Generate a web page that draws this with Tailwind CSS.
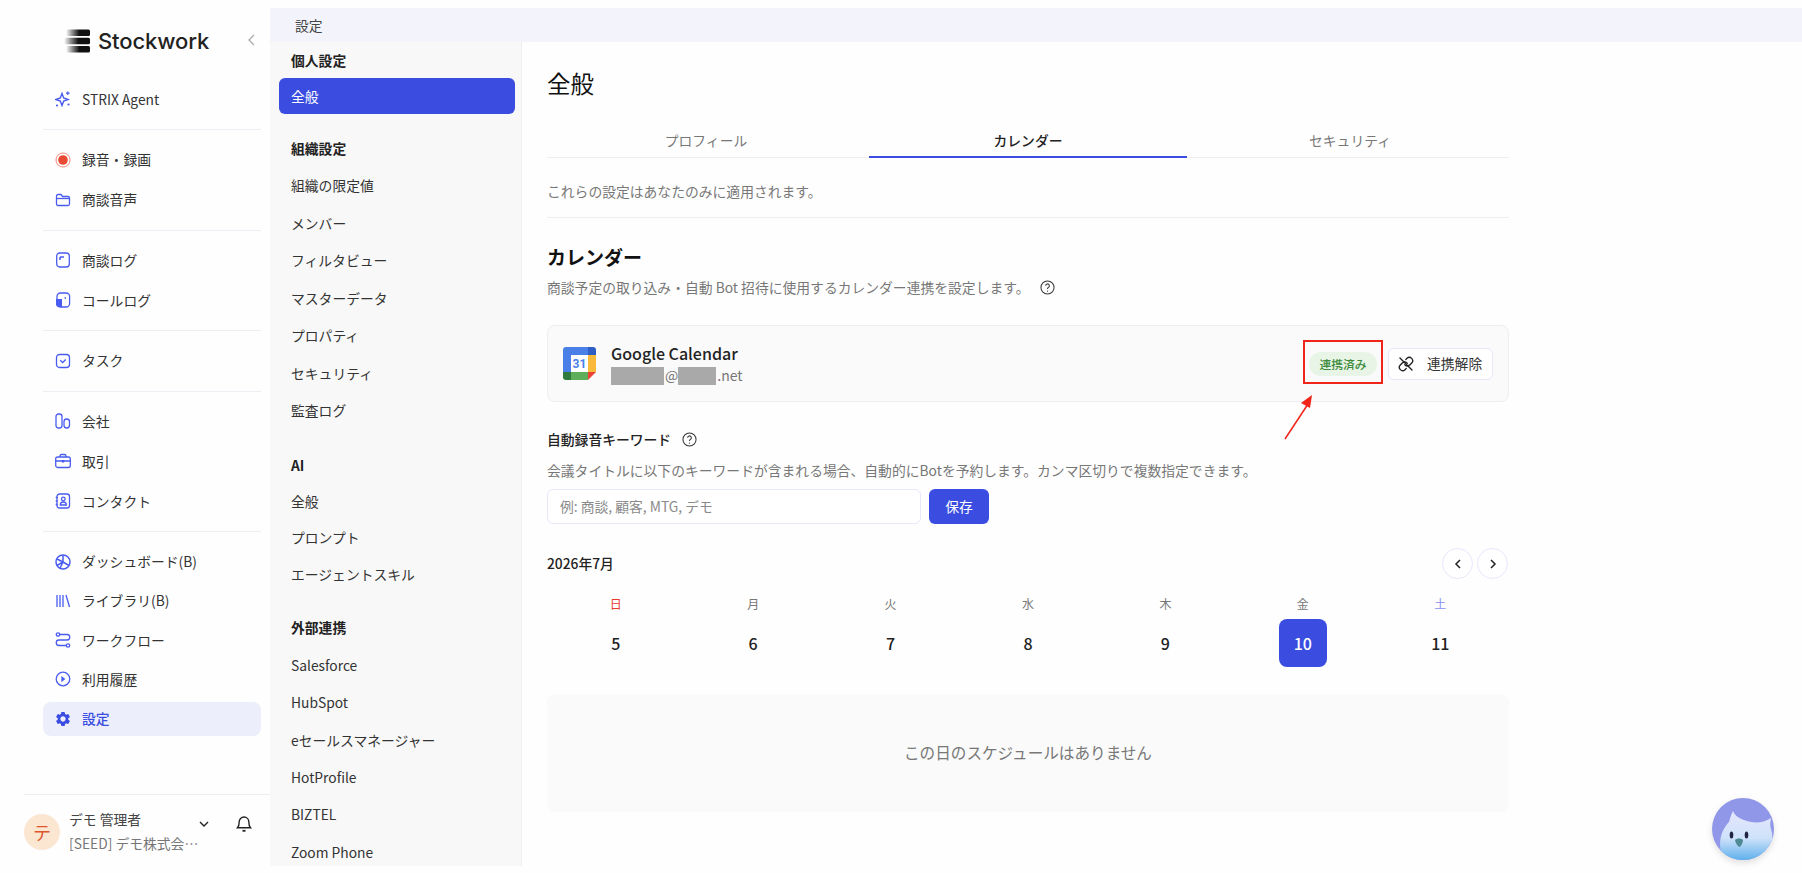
<!DOCTYPE html>
<html lang="ja">
<head>
    <meta charset="UTF-8">
    <title>設定 - Stockwork</title>
    <script src="https://cdn.jsdelivr.net/npm/@tailwindcss/browser@4"></script>
</head>
<body class="bg-[#fefefe] font-['Noto_Sans_CJK_JP','Noto_Sans',sans-serif] text-[13.8px] text-[#333]">
<div class="relative flex h-[873px] w-[1802px] overflow-hidden">

    <!-- メインサイドバー -->
    <aside class="flex h-full w-[270px] shrink-0 flex-col">
        <div class="relative flex h-[82px] shrink-0 items-center pl-[64px]">
            <svg class="h-[24px] w-[27px]" viewBox="0 0 27 24">
                <defs><linearGradient id="lg" x1="0" x2="1" y1="0" y2="0"><stop offset="0" stop-color="#111" stop-opacity="0"/><stop offset=".55" stop-color="#111"/><stop offset="1" stop-color="#111"/></linearGradient></defs>
                <rect x="2" y="0.500" width="24" height="6.500" rx="1.500" fill="url(#lg)"/>
                <rect x="0" y="8.700" width="26" height="6.500" rx="1.500" fill="url(#lg)"/>
                <rect x="2" y="17" width="24" height="6.500" rx="1.500" fill="url(#lg)"/>
            </svg>
            <span class="ml-[7px] font-['Inter',sans-serif] text-[22px] leading-none font-medium tracking-[-0.1px] text-[#222]">Stockwork</span>
            <svg class="absolute top-[33px] left-[246px] h-[14px] w-[10px] text-[#aaa]" viewBox="0 0 10 14" fill="none" stroke="currentColor" stroke-width="1.300"><path d="M8 2 3 7l5 5"/></svg>
        </div>
        <nav class="ml-[43px] flex w-[218px] flex-col">
            <div class="flex flex-col gap-[6px]">
                <a class="flex h-[34px] items-center gap-[11px] px-[12px]">
                    <svg class="h-[16px] w-[16px] text-[#4a5cf0]" viewBox="0 0 16 16" fill="none" stroke="currentColor" stroke-width="1.400"><path d="M7 2.500 8.700 7l4.300 1.500L8.700 10 7 14.500 5.300 10 1 8.500 5.300 7z"/><path d="M12.800 .5v3.500M11 2.200h3.600" stroke-width="1.200"/><circle cx="13.500" cy="13.500" r="1.100" fill="currentColor" stroke="none"/><circle cx="2" cy="14.500" r="1.100" fill="currentColor" stroke="none"/></svg>
                    <span>STRIX Agent</span>
                </a>
            </div>
            <div class="mt-[13px] mb-[12.5px] h-px bg-[#eceef3]"></div>
            <div class="flex flex-col gap-[6px]">
                <a class="flex h-[34px] items-center gap-[11px] px-[12px]">
                    <svg class="h-[16px] w-[16px]" viewBox="0 0 16 16" fill="none"><circle cx="8" cy="8" r="7" stroke="#f08a78" stroke-width="1"/><circle cx="8" cy="8" r="4.800" fill="#ea4a32"/></svg>
                    <span>録音・録画</span>
                </a>
                <a class="flex h-[34px] items-center gap-[11px] px-[12px]">
                    <svg class="h-[16px] w-[16px] text-[#4a5cf0]" viewBox="0 0 16 16" fill="none" stroke="currentColor" stroke-width="1.300"><path d="M1.500 4a1.500 1.500 0 0 1 1.500-1.500h3l1.500 2H13A1.500 1.500 0 0 1 14.500 6v6a1.500 1.500 0 0 1-1.500 1.500H3A1.500 1.500 0 0 1 1.500 12z"/><path d="M1.500 6.500h13"/></svg>
                    <span>商談音声</span>
                </a>
            </div>
            <div class="mt-[13px] mb-[12.5px] h-px bg-[#eceef3]"></div>
            <div class="flex flex-col gap-[6px]">
                <a class="flex h-[34px] items-center gap-[11px] px-[12px]">
                    <svg class="h-[16px] w-[16px] text-[#4a5cf0]" viewBox="0 0 16 16" fill="none" stroke="currentColor" stroke-width="1.300"><rect x="1.700" y="1" width="12.600" height="14" rx="3"/><path d="M5 5h4M5 5v3" stroke-width="1.500"/></svg>
                    <span>商談ログ</span>
                </a>
                <a class="flex h-[34px] items-center gap-[11px] px-[12px]">
                    <svg class="h-[16px] w-[16px] text-[#4a5cf0]" viewBox="0 0 16 16" fill="none" stroke="currentColor" stroke-width="1.300"><rect x="2" y="1" width="12.600" height="14" rx="3.500"/><path d="M1 7h6v8H4a3 3 0 0 1-3-3z" fill="currentColor" stroke="none"/><path d="M9.500 6h1.500"/></svg>
                    <span>コールログ</span>
                </a>
            </div>
            <div class="mt-[13px] mb-[12.5px] h-px bg-[#eceef3]"></div>
            <a class="flex h-[34px] items-center gap-[11px] px-[12px]">
                <svg class="h-[16px] w-[16px] text-[#4a5cf0]" viewBox="0 0 16 16" fill="none" stroke="currentColor" stroke-width="1.300"><rect x="1.500" y="1.500" width="13" height="13" rx="3"/><path d="m5.200 7.200 2.500 2.300 3-3"/></svg>
                <span>タスク</span>
            </a>
            <div class="mt-[13px] mb-[12.5px] h-px bg-[#eceef3]"></div>
            <div class="flex flex-col gap-[6px]">
                <a class="flex h-[34px] items-center gap-[11px] px-[12px]">
                    <svg class="h-[16px] w-[16px] text-[#4a5cf0]" viewBox="0 0 16 16" fill="none" stroke="currentColor" stroke-width="1.300"><rect x="1" y="1" width="6" height="14" rx="2.500"/><rect x="9" y="6" width="5.500" height="9" rx="2.700"/></svg>
                    <span>会社</span>
                </a>
                <a class="flex h-[34px] items-center gap-[11px] px-[12px]">
                    <svg class="h-[16px] w-[16px] text-[#4a5cf0]" viewBox="0 0 16 16" fill="none" stroke="currentColor" stroke-width="1.300"><rect x="0.700" y="4" width="14.600" height="10.500" rx="2"/><path d="M5 4V3a1.500 1.500 0 0 1 1.500-1.500h3A1.500 1.500 0 0 1 11 3v1M.7 8h14.600"/><rect x="6.800" y="7" width="2.400" height="2.500" fill="currentColor" stroke="none"/></svg>
                    <span>取引</span>
                </a>
                <a class="flex h-[34px] items-center gap-[11px] px-[12px]">
                    <svg class="h-[16px] w-[16px] text-[#4a5cf0]" viewBox="0 0 16 16" fill="none" stroke="currentColor" stroke-width="1.300"><rect x="2" y="1" width="12.500" height="14" rx="2.500"/><circle cx="8.300" cy="6" r="1.800"/><path d="M5.300 12c0-4 6-4 6 0zM.7 4.500h2M.7 8h2M.7 11.500h2"/></svg>
                    <span>コンタクト</span>
                </a>
            </div>
            <div class="mt-[13px] mb-[12.5px] h-px bg-[#eceef3]"></div>
            <div class="flex flex-col gap-[5.3px]">
                <a class="flex h-[34px] items-center gap-[11px] px-[12px]">
                    <svg class="h-[16px] w-[16px] text-[#4a5cf0]" viewBox="0 0 16 16" fill="none" stroke="currentColor" stroke-width="1.500"><circle cx="8" cy="8" r="7"/><path d="M8 8V1M8 8 2 11.500M8 8l6 3.500M8 8l-3 6.300M8 8l-6-3"/></svg>
                    <span>ダッシュボード(B)</span>
                </a>
                <a class="flex h-[34px] items-center gap-[11px] px-[12px]">
                    <svg class="h-[16px] w-[16px] text-[#4a5cf0]" viewBox="0 0 16 16" fill="none" stroke="currentColor" stroke-width="1.300"><path d="M2 2v12M5 2v12M8 2v12M11 2l3.500 12"/></svg>
                    <span>ライブラリ(B)</span>
                </a>
                <a class="flex h-[34px] items-center gap-[11px] px-[12px]">
                    <svg class="h-[16px] w-[16px] text-[#4a5cf0]" viewBox="0 0 16 16" fill="none" stroke="currentColor" stroke-width="1.300"><circle cx="3" cy="2.500" r="1.700"/><circle cx="13" cy="13.500" r="1.700"/><path d="M4.700 2.500H12a2.700 2.700 0 0 1 0 5.500H4a2.700 2.700 0 0 0 0 5.500h7.300"/></svg>
                    <span>ワークフロー</span>
                </a>
                <a class="flex h-[34px] items-center gap-[11px] px-[12px]">
                    <svg class="h-[16px] w-[16px] text-[#4a5cf0]" viewBox="0 0 16 16" fill="none" stroke="currentColor" stroke-width="1.300"><circle cx="8" cy="8" r="6.800"/><path d="m7 6.200 2.300 1.800L7 9.800z" fill="currentColor"/></svg>
                    <span>利用履歴</span>
                </a>
                <a class="flex h-[34px] items-center gap-[11px] rounded-lg bg-[#eceefc] px-[12px] font-medium text-[#3a4de0]">
                    <svg class="h-[16px] w-[16px] scale-110" viewBox="0 0 24 24" fill="currentColor"><path d="M19.140 12.940c.04-.3.06-.61.06-.94 0-.32-.02-.64-.07-.94l2.030-1.580a.49.49 0 0 0 .12-.61l-1.920-3.320a.488.488 0 0 0-.59-.22l-2.390.96c-.5-.38-1.030-.7-1.620-.94l-.36-2.540a.484.484 0 0 0-.48-.41h-3.840c-.24 0-.43.17-.47.41l-.36 2.540c-.59.24-1.130.57-1.620.94l-2.390-.96c-.22-.08-.47 0-.59.22L2.740 8.870c-.12.21-.08.47.12.61l2.030 1.580c-.05.3-.09.63-.09.94s.02.64.07.94l-2.030 1.580a.49.49 0 0 0-.12.61l1.920 3.320c.12.22.37.29.59.22l2.390-.96c.5.38 1.030.7 1.620.94l.36 2.540c.05.24.24.41.48.41h3.840c.24 0 .44-.17.47-.41l.36-2.540c.59-.24 1.130-.56 1.620-.94l2.390.96c.22.08.47 0 .59-.22l1.920-3.320c.12-.22.07-.47-.12-.61l-2.010-1.580zM12 15.600c-1.980 0-3.600-1.620-3.600-3.600s1.620-3.600 3.600-3.600 3.600 1.620 3.600 3.600-1.620 3.600-3.600 3.600z"/></svg>
                    <span>設定</span>
                </a>
            </div>
        </nav>
        <div class="mt-auto ml-[24px] flex h-[79px] items-start border-t border-[#eeeef2] pt-[19px]">
            <div class="flex h-[36px] w-[36px] shrink-0 items-center justify-center rounded-full bg-[#fbe6d2] text-[18px] text-[#e0552b]">テ</div>
            <div class="mt-[-2px] ml-[9px] flex w-[131px] flex-col">
                <div class="flex h-[16px] items-center leading-none text-[#444]"><span>デモ 管理者</span></div>
                <div class="mt-[4px] truncate leading-[22px] text-[#777]">[SEED] デモ株式会社テスト</div>
            </div>
            <svg class="mt-[4px] ml-[-2px] h-[12px] w-[12px] text-[#222]" viewBox="0 0 12 12" fill="none" stroke="currentColor" stroke-width="1.400"><path d="m2 4 4 4 4-4"/></svg>
            <svg class="mt-[1px] ml-[25px] h-[18px] w-[18px] text-[#222]" viewBox="0 0 18 18" fill="none" stroke="currentColor" stroke-width="1.400"><path d="M9 2a4.800 4.800 0 0 0-4.800 4.800c0 4.200-1.700 6-1.700 6h13s-1.700-1.800-1.700-6A4.800 4.800 0 0 0 9 2z"/><path d="M7.500 15.800h3" stroke-width="1.800"/></svg>
        </div>
    </aside>

    <!-- 右側 -->
    <div class="mt-[8px] mb-[7px] flex min-w-0 flex-1 flex-col">
        <header class="flex h-[34px] shrink-0 items-center bg-[#f3f4fb] pl-[25px] text-[#444]">設定</header>
        <div class="flex min-h-0 flex-1">

            <!-- 設定メニュー -->
            <nav class="w-[252px] shrink-0 overflow-hidden border-r border-[#f0f0f0] bg-[#f8f8f8]">
                <div class="flex h-[36px] items-center pl-[21px] font-semibold text-[#222]">個人設定</div>
                <a class="ml-[9px] flex h-[36px] w-[236px] items-center rounded-md bg-[#3a4de0] pl-[12px] text-white">全般</a>
                <div class="mt-[16px] flex h-[37px] items-center pl-[21px] font-semibold text-[#222]">組織設定</div>
                <a class="flex h-[37.5px] items-center pl-[21px]">組織の限定値</a>
                <a class="flex h-[37.5px] items-center pl-[21px]">メンバー</a>
                <a class="flex h-[37.5px] items-center pl-[21px]">フィルタビュー</a>
                <a class="flex h-[37.5px] items-center pl-[21px]">マスターデータ</a>
                <a class="flex h-[37.5px] items-center pl-[21px]">プロパティ</a>
                <a class="flex h-[37.5px] items-center pl-[21px]">セキュリティ</a>
                <a class="flex h-[37.5px] items-center pl-[21px]">監査ログ</a>
                <div class="mt-[17.5px] flex h-[36px] items-center pl-[21px] font-semibold text-[#222]">AI</div>
                <a class="flex h-[36.5px] items-center pl-[21px]">全般</a>
                <a class="flex h-[36.5px] items-center pl-[21px]">プロンプト</a>
                <a class="flex h-[36.5px] items-center pl-[21px]">エージェントスキル</a>
                <div class="mt-[16.5px] flex h-[37.5px] items-center pl-[21px] font-semibold text-[#222]">外部連携</div>
                <a class="flex h-[37.4px] items-center pl-[21px]">Salesforce</a>
                <a class="flex h-[37.4px] items-center pl-[21px]">HubSpot</a>
                <a class="flex h-[37.4px] items-center pl-[21px]">eセールスマネージャー</a>
                <a class="flex h-[37.4px] items-center pl-[21px]">HotProfile</a>
                <a class="flex h-[37.4px] items-center pl-[21px]">BIZTEL</a>
                <a class="flex h-[37.4px] items-center pl-[21px]">Zoom Phone</a>
            </nav>

            <!-- メイン -->
            <main class="ml-[25px] w-[962px] shrink-0 pt-[24px]">
                <h1 class="h-[34px] text-[23.5px] leading-[34px] text-[#111]">全般</h1>

                <div class="mt-[25px] grid h-[33px] grid-cols-3 gap-[4px] border-b border-[#eeeeee] text-center">
                    <div class="pt-[6px] leading-[18px] text-[#777]">プロフィール</div>
                    <div class="mb-[-1px] border-b-2 border-[#3a4de0] pt-[6px] leading-[18px] font-medium text-[#222]">カレンダー</div>
                    <div class="pt-[6px] leading-[18px] text-[#777]">セキュリティ</div>
                </div>

                <p class="mt-[23px] h-[20px] leading-[20px] text-[#777]">これらの設定はあなたのみに適用されます。</p>
                <div class="mt-[16px] h-px bg-[#eeeeee]"></div>

                <h2 class="mt-[25px] h-[28px] text-[19px] leading-[28px] font-semibold text-[#111]">カレンダー</h2>
                <div class="mt-[6px] flex h-[20px] items-center text-[#777]">
                    <span>商談予定の取り込み・自動 Bot 招待に使用するカレンダー連携を設定します。</span>
                    <svg class="ml-[11px] h-[15px] w-[15px] text-[#333]" viewBox="0 0 16 16" fill="none" stroke="currentColor" stroke-width="1.100"><circle cx="8" cy="8" r="7"/><path d="M6 6.200a2 2 0 1 1 3 1.700c-.7.4-1 .8-1 1.600"/><circle cx="8" cy="11.800" r=".7" fill="currentColor" stroke="none"/></svg>
                </div>

                <!-- Google Calendar カード -->
                <div class="mt-[28px] flex h-[77px] items-center rounded-lg border border-[#eeeeee] bg-[#fafafa] pr-[15px] pl-[15px]">
                    <svg class="h-[33px] w-[33px] shrink-0" viewBox="0 0 33 33">
                        <path d="M3 0h24v8H8v17H0V3a3 3 0 0 1 3-3z" fill="#4a7fe8"/>
                        <path d="M25 0h5a3 3 0 0 1 3 3v5h-8z" fill="#2f5fc4"/>
                        <rect x="25" y="8" width="8" height="17" fill="#f9b93a"/>
                        <rect x="8" y="25" width="17" height="8" fill="#5fae5c"/>
                        <path d="M0 25h8v8H3a3 3 0 0 1-3-3z" fill="#2f7a3d"/>
                        <path d="M25 25h8l-8 8z" fill="#ea4335"/>
                        <rect x="8" y="8" width="17" height="17" fill="#fff"/>
                        <text x="16.500" y="21" text-anchor="middle" font-size="12" font-weight="700" fill="#4a7fe8" font-family="Roboto, sans-serif">31</text>
                    </svg>
                    <div class="ml-[15px] flex flex-col">
                        <div class="h-[22px] text-[16px] leading-[22px] font-medium text-[#222]">Google Calendar</div>
                        <div class="mt-[2px] flex h-[20px] items-center text-[14px] text-[#777]">
                            <span class="h-[18px] w-[53px] bg-[#a9a9a9]"></span><span class="ml-[1px]">@</span><span class="h-[18px] w-[38px] bg-[#a9a9a9]"></span><span class="ml-[1px]">.net</span>
                        </div>
                    </div>
                    <span class="mr-[11px] ml-auto flex h-[24px] w-[68px] items-center justify-center rounded-full bg-[#e8f5e6] text-[11.8px] font-medium text-[#3f8a3c]">連携済み</span>
                    <button class="flex h-[32px] w-[105px] items-center rounded-md border border-[#e6e8fb] bg-white pl-[9px] text-[#333]">
                        <svg class="h-[16px] w-[16px] text-[#222]" viewBox="0 0 24 24" fill="none" stroke="currentColor" stroke-width="2" stroke-linecap="round" stroke-linejoin="round"><path d="M10 13a5 5 0 0 0 7.540.54l3-3a5 5 0 0 0-7.070-7.070l-1.720 1.710"/><path d="M14 11a5 5 0 0 0-7.540-.54l-3 3a5 5 0 0 0 7.070 7.070l1.710-1.710"/><path d="m3 3 18 18"/></svg>
                        <span class="ml-[13px]">連携解除</span>
                    </button>
                </div>

                <!-- 自動録音キーワード -->
                <div class="mt-[27px] flex h-[20px] items-center font-medium text-[#222]">
                    <span>自動録音キーワード</span>
                    <svg class="ml-[11px] h-[15px] w-[15px] text-[#333]" viewBox="0 0 16 16" fill="none" stroke="currentColor" stroke-width="1.100"><circle cx="8" cy="8" r="7"/><path d="M6 6.200a2 2 0 1 1 3 1.700c-.7.4-1 .8-1 1.600"/><circle cx="8" cy="11.800" r=".7" fill="currentColor" stroke="none"/></svg>
                </div>
                <p class="mt-[11px] h-[20px] leading-[20px] text-[#777]">会議タイトルに以下のキーワードが含まれる場合、自動的にBotを予約します。カンマ区切りで複数指定できます。</p>
                <div class="mt-[9px] flex h-[35px] gap-[8px]">
                    <input class="h-full w-[374px] rounded-md border border-[#e6e8fb] bg-white px-[12px] pb-[1px] placeholder:text-[#8a8a8a]" placeholder="例: 商談, 顧客, MTG, デモ">
                    <button class="h-full w-[60px] rounded-md bg-[#3a4de0] text-white">保存</button>
                </div>

                <!-- カレンダー -->
                <div class="mt-[24px] flex h-[31px] items-center pr-[1px]">
                    <span class="font-medium text-[#222]">2026年7月</span>
                    <div class="ml-auto flex gap-[4px]">
                        <button class="flex h-[31px] w-[31px] items-center justify-center rounded-full border border-[#e6e8fb] bg-white">
                            <svg class="h-[12px] w-[12px] text-[#222]" viewBox="0 0 12 12" fill="none" stroke="currentColor" stroke-width="1.500"><path d="M8 2 4 6l4 4"/></svg>
                        </button>
                        <button class="flex h-[31px] w-[31px] items-center justify-center rounded-full border border-[#e6e8fb] bg-white">
                            <svg class="h-[12px] w-[12px] text-[#222]" viewBox="0 0 12 12" fill="none" stroke="currentColor" stroke-width="1.500"><path d="m4 2 4 4-4 4"/></svg>
                        </button>
                    </div>
                </div>
                <div class="mt-[15px] grid h-[20px] grid-cols-7 items-center text-center text-[12px] text-[#777]">
                    <span class="text-[#e8392f]">日</span><span>月</span><span>火</span><span>水</span><span>木</span><span>金</span><span class="text-[#8a94f0]">土</span>
                </div>
                <div class="mt-[5px] grid h-[48px] grid-cols-7 items-center justify-items-center text-[16px] font-medium text-[#222]">
                    <span>5</span><span>6</span><span>7</span><span>8</span><span>9</span>
                    <span class="flex h-[48px] w-[48px] items-center justify-center rounded-lg bg-[#3a4de0] text-white">10</span>
                    <span>11</span>
                </div>
                <div class="mt-[27px] flex h-[118px] items-center justify-center rounded-lg bg-[#fafafa] text-[15.6px] text-[#777]">この日のスケジュールはありません</div>
            </main>
        </div>
    </div>

    <!-- 注釈: 赤枠と矢印 -->
    <div class="absolute top-[340px] left-[1303px] h-[44px] w-[80px] border-2 border-[#f02418]"></div>
    <svg class="absolute top-[390px] left-[1280px] h-[54px] w-[40px]" viewBox="0 0 40 54" fill="none">
        <path d="M5 49 30 11" stroke="#f02418" stroke-width="1.500"/>
        <path d="M32 5 21 13l9 5z" fill="#f02418"/>
    </svg>

    <!-- チャットボット -->
    <svg class="absolute top-[798px] left-[1712px] h-[62px] w-[62px] drop-shadow-md" viewBox="0 0 62 62">
        <defs>
            <linearGradient id="bird" x1="0.500" y1="0" x2="0.500" y2="1"><stop offset="0" stop-color="#e4e6fc"/><stop offset=".55" stop-color="#cfe2fa"/><stop offset="1" stop-color="#5fb0ec"/></linearGradient>
            <clipPath id="round"><circle cx="31" cy="31" r="31"/></clipPath>
        </defs>
        <circle cx="31" cy="31" r="31" fill="#9097e8"/>
        <g clip-path="url(#round)">
            <path d="M12 62C5 48 8 33 17 24c1-4 2-7 4-11 2 5 6 7 11 9 8 3 18 4 27-2-1 5-1 8 0 11 3 9 1 21-7 31z" fill="url(#bird)"/>
            <ellipse cx="19.500" cy="37" rx="1.800" ry="3.500" fill="#1f2340"/>
            <ellipse cx="34.500" cy="37" rx="1.800" ry="3.500" fill="#1f2340"/>
            <path d="M23 42c2-2 6-2 8 0 0 3-2 6-3.500 7-2-1-4-4-4.500-7z" fill="#4e8a93"/>
        </g>
    </svg>
</div>
</body>
</html>
